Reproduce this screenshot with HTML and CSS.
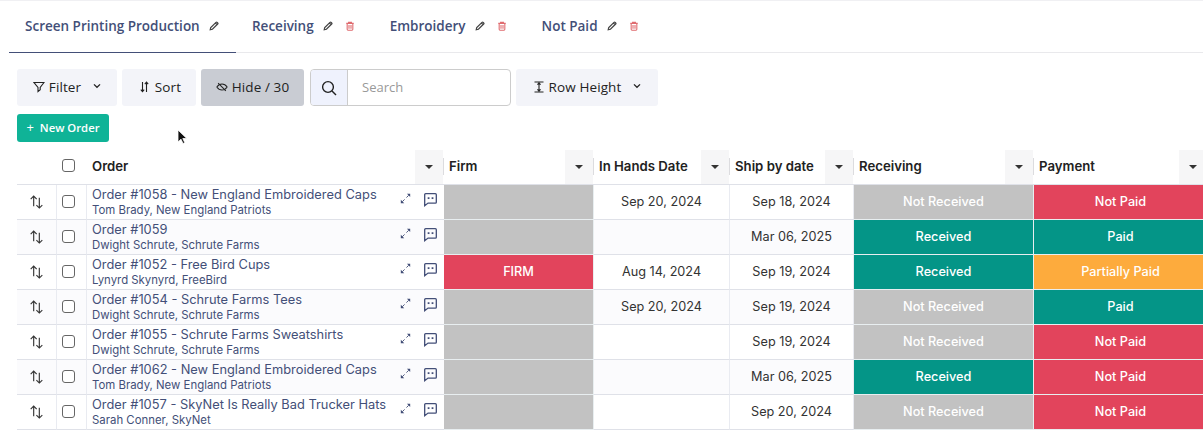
FILE: index.html
```html
<!DOCTYPE html>
<html lang="en">
<head>
    <meta charset="UTF-8">
    <title>Orders</title>
    <link rel="stylesheet" href="styles.css">
</head>
<body>
    <svg class="defs" width="0" height="0">
        <symbol id="pen" viewBox="0 0 12 12"><path d="M1.500 10.500l.6-2.600L8.400 1.600a1 1 0 0 1 1.400 0l.6.6a1 1 0 0 1 0 1.400L4.100 9.900z M7.600 2.400l2 2" fill="none" stroke="currentColor" stroke-width="1.500"/></symbol>
        <symbol id="trash" viewBox="0 0 12 12"><path d="M1.500 2.800h9M4.300 2.600V1.400h3.400v1.200M2.600 3v7a1 1 0 0 0 1 1h4.800a1 1 0 0 0 1-1V3M4.800 4.800v4.400M7.200 4.800v4.400" fill="none" stroke="currentColor" stroke-width="1.300"/></symbol>
        <symbol id="chev" viewBox="0 0 10 6"><path d="M1.200 1l3.800 3.600L8.800 1" fill="none" stroke="currentColor" stroke-width="1.600"/></symbol>
        <symbol id="updown" viewBox="0 0 16 16"><path d="M5 13V2.500M1.800 5.500L5 2.200l3.200 3.300M11 4V15M7.900 11.800l3.100 3.200 3.200-3.200" fill="none" stroke="currentColor" stroke-width="1.200"/></symbol>
        <symbol id="expand" viewBox="0 0 12 12"><path d="M7 5l2.500-2.500" fill="none" stroke="currentColor" stroke-width="1"/><path d="M7.600 .9h3.500v3.500z" fill="currentColor"/><path d="M5 7l-2.500 2.500" fill="none" stroke="currentColor" stroke-width="1"/><path d="M.9 7.400v3.700h3.700z" fill="currentColor"/></symbol>
        <symbol id="chat" viewBox="0 0 16 16"><path d="M2.800 1.800h10.400a1 1 0 0 1 1 1v8a1 1 0 0 1-1 1H5.400l-3.600 2.800V2.800a1 1 0 0 1 1-1z" fill="none" stroke="currentColor" stroke-width="1.400"/><rect x="5" y="5.600" width="1.900" height="1.900" fill="currentColor"/><rect x="9.200" y="5.600" width="1.900" height="1.900" fill="currentColor"/></symbol>
    </svg>

    <div class="page">
        <nav class="tabs">
            <div class="tab tab-active">
                <span>Screen Printing Production</span>
                <svg class="ico-pen"><use href="#pen"/></svg>
            </div>
            <div class="tab">
                <span>Receiving</span>
                <svg class="ico-pen"><use href="#pen"/></svg>
                <svg class="ico-trash"><use href="#trash"/></svg>
            </div>
            <div class="tab">
                <span>Embroidery</span>
                <svg class="ico-pen"><use href="#pen"/></svg>
                <svg class="ico-trash"><use href="#trash"/></svg>
            </div>
            <div class="tab">
                <span>Not Paid</span>
                <svg class="ico-pen"><use href="#pen"/></svg>
                <svg class="ico-trash"><use href="#trash"/></svg>
            </div>
        </nav>

        <div class="toolbar">
            <button class="tool tool-filter">
                <svg class="ico-tool" viewBox="0 0 12 12"><path d="M1 1.500h10L7.200 6.400v2.400L5 10.600V6.400z" fill="none" stroke="currentColor" stroke-width="1.100"/></svg>
                Filter
                <svg class="ico-chev"><use href="#chev"/></svg>
            </button>
            <button class="tool tool-sort">
                <svg class="ico-sort" viewBox="0 0 9 12"><path d="M2.500 1v9.500M.8 8.600l1.700 2 1.700-2M6.500 11V1.500M4.800 3.200l1.700-2 1.700 2" fill="none" stroke="currentColor" stroke-width="1.100"/></svg>
                Sort
            </button>
            <button class="tool tool-hide">
                <svg class="ico-tool" viewBox="0 0 14 12"><path d="M1 6c1.600-2.400 3.600-3.600 6-3.600S11.400 3.600 13 6c-1.600 2.400-3.600 3.600-6 3.600S2.600 8.400 1 6zM2.500 1.500l9 9" fill="none" stroke="currentColor" stroke-width="1.200"/></svg>
                Hide / 30
            </button>
            <div class="search">
                <span class="search-btn">
                    <svg class="ico-search" viewBox="0 0 16 16"><circle cx="7" cy="7" r="5.400" fill="none" stroke="currentColor" stroke-width="1.400"/><path d="M11 11l4 4" fill="none" stroke="currentColor" stroke-width="1.400"/></svg>
                </span>
                <span class="search-input">Search</span>
            </div>
            <button class="tool tool-height">
                <svg class="ico-tool" viewBox="0 0 12 12"><path d="M1.500 1h9M1.500 11h9M6 2v8M4.400 3.600L6 2l1.600 1.600M4.400 8.400L6 10l1.600-1.600" fill="none" stroke="currentColor" stroke-width="1.100"/></svg>
                Row Height
                <svg class="ico-chev"><use href="#chev"/></svg>
            </button>
        </div>

        <button class="new-order"><span class="plus">+</span> New Order</button>

        <svg class="cursor" viewBox="0 0 10 16"><path d="M1 1v12l3-2.800 2 4.300 1.800-.8-2-4.200h4z" fill="#111" stroke="#fff" stroke-width=".8"/></svg>

        <div class="grid">
            <div class="head head-blank"></div>
            <div class="head"><span class="check"></span></div>
            <div class="head">Order<span class="menu"></span></div>
            <div class="head">Firm<span class="menu"></span></div>
            <div class="head">In Hands Date<span class="menu"></span></div>
            <div class="head">Ship by date<span class="menu"></span></div>
            <div class="head">Receiving<span class="menu"></span></div>
            <div class="head">Payment<span class="menu"></span></div>

            <div class="cell move"><svg class="ico-updown"><use href="#updown"/></svg></div>
            <div class="cell pick"><span class="check"></span></div>
            <div class="cell order">
                <div class="order-text"><div class="order-name">Order #1058 - New England Embroidered Caps</div><div class="order-sub">Tom Brady, New England Patriots</div></div>
                <svg class="ico-expand"><use href="#expand"/></svg><svg class="ico-chat"><use href="#chat"/></svg>
            </div>
            <div class="cell fill grey"></div>
            <div class="cell date">Sep 20, 2024</div>
            <div class="cell date">Sep 18, 2024</div>
            <div class="cell fill grey">Not Received</div>
            <div class="cell fill red">Not Paid</div>

            <div class="cell move alt"><svg class="ico-updown"><use href="#updown"/></svg></div>
            <div class="cell pick alt"><span class="check"></span></div>
            <div class="cell order alt">
                <div class="order-text"><div class="order-name">Order #1059</div><div class="order-sub">Dwight Schrute, Schrute Farms</div></div>
                <svg class="ico-expand"><use href="#expand"/></svg><svg class="ico-chat"><use href="#chat"/></svg>
            </div>
            <div class="cell fill grey"></div>
            <div class="cell date alt"></div>
            <div class="cell date alt">Mar 06, 2025</div>
            <div class="cell fill green">Received</div>
            <div class="cell fill green">Paid</div>

            <div class="cell move"><svg class="ico-updown"><use href="#updown"/></svg></div>
            <div class="cell pick"><span class="check"></span></div>
            <div class="cell order">
                <div class="order-text"><div class="order-name">Order #1052 - Free Bird Cups</div><div class="order-sub">Lynyrd Skynyrd, FreeBird</div></div>
                <svg class="ico-expand"><use href="#expand"/></svg><svg class="ico-chat"><use href="#chat"/></svg>
            </div>
            <div class="cell fill red">FIRM</div>
            <div class="cell date">Aug 14, 2024</div>
            <div class="cell date">Sep 19, 2024</div>
            <div class="cell fill green">Received</div>
            <div class="cell fill orange">Partially Paid</div>

            <div class="cell move alt"><svg class="ico-updown"><use href="#updown"/></svg></div>
            <div class="cell pick alt"><span class="check"></span></div>
            <div class="cell order alt">
                <div class="order-text"><div class="order-name">Order #1054 - Schrute Farms Tees</div><div class="order-sub">Dwight Schrute, Schrute Farms</div></div>
                <svg class="ico-expand"><use href="#expand"/></svg><svg class="ico-chat"><use href="#chat"/></svg>
            </div>
            <div class="cell fill grey"></div>
            <div class="cell date alt">Sep 20, 2024</div>
            <div class="cell date alt">Sep 19, 2024</div>
            <div class="cell fill grey">Not Received</div>
            <div class="cell fill green">Paid</div>

            <div class="cell move"><svg class="ico-updown"><use href="#updown"/></svg></div>
            <div class="cell pick"><span class="check"></span></div>
            <div class="cell order">
                <div class="order-text"><div class="order-name">Order #1055 - Schrute Farms Sweatshirts</div><div class="order-sub">Dwight Schrute, Schrute Farms</div></div>
                <svg class="ico-expand"><use href="#expand"/></svg><svg class="ico-chat"><use href="#chat"/></svg>
            </div>
            <div class="cell fill grey"></div>
            <div class="cell date"></div>
            <div class="cell date">Sep 19, 2024</div>
            <div class="cell fill grey">Not Received</div>
            <div class="cell fill red">Not Paid</div>

            <div class="cell move alt"><svg class="ico-updown"><use href="#updown"/></svg></div>
            <div class="cell pick alt"><span class="check"></span></div>
            <div class="cell order alt">
                <div class="order-text"><div class="order-name">Order #1062 - New England Embroidered Caps</div><div class="order-sub">Tom Brady, New England Patriots</div></div>
                <svg class="ico-expand"><use href="#expand"/></svg><svg class="ico-chat"><use href="#chat"/></svg>
            </div>
            <div class="cell fill grey"></div>
            <div class="cell date alt"></div>
            <div class="cell date alt">Mar 06, 2025</div>
            <div class="cell fill green">Received</div>
            <div class="cell fill red">Not Paid</div>

            <div class="cell move"><svg class="ico-updown"><use href="#updown"/></svg></div>
            <div class="cell pick"><span class="check"></span></div>
            <div class="cell order">
                <div class="order-text"><div class="order-name">Order #1057 - SkyNet Is Really Bad Trucker Hats</div><div class="order-sub">Sarah Conner, SkyNet</div></div>
                <svg class="ico-expand"><use href="#expand"/></svg><svg class="ico-chat"><use href="#chat"/></svg>
            </div>
            <div class="cell fill grey"></div>
            <div class="cell date"></div>
            <div class="cell date">Sep 20, 2024</div>
            <div class="cell fill grey">Not Received</div>
            <div class="cell fill red">Not Paid</div>
        </div>
    </div>
</body>
</html>
```

FILE: styles.css
```css
html, body {
    margin: 0;
    height: 448px;
    overflow: hidden;
    background: #fff;
}
body {
    font-family: Inter, "Liberation Sans", sans-serif;
    color: #222;
}
.defs {
    position: absolute;
}
.page {
    position: relative;
    height: 448px;
    overflow: hidden;
    border-top: 1px solid #f0f0f3;
}

/* tabs */
.tabs {
    display: flex;
    height: 51px;
    margin-left: 9px;
    border-bottom: 1px solid #e9e9ec;
    font-family: "Open Sans", sans-serif;
    font-size: 13.5px;
    font-weight: 600;
    color: #434f78;
}
.tab {
    display: flex;
    align-items: center;
    gap: 9px;
    height: 52px;
    box-sizing: border-box;
    padding: 0 16px 2px 16px;
    margin-right: 3px;
    border-bottom: 1px solid transparent;
}
.tab-active {
    width: 227px;
    margin-right: 0;
    border-bottom-color: #434f78;
}
.ico-pen {
    width: 10px;
    height: 10px;
    color: #444;
}
.ico-trash {
    width: 10px;
    height: 10px;
    margin-left: 3px;
    color: #df6b6f;
}

/* toolbar */
.toolbar {
    display: flex;
    gap: 5px;
    margin: 16px 0 0 17px;
    height: 37px;
}
.tool {
    display: flex;
    align-items: center;
    justify-content: center;
    gap: 4px;
    height: 37px;
    padding: 0 0 2px;
    border: none;
    border-radius: 3px;
    background: #f3f4f9;
    font-family: "Open Sans", sans-serif;
    font-size: 13.5px;
    letter-spacing: .1px;
    color: #222;
}
.tool-filter { width: 100px; }
.tool-sort { width: 74px; gap: 6px; padding-left: 3px; }
.tool-hide { width: 103px; margin-right: 1px; background: #c9ccd3; }
.tool-height { width: 142px; }
.ico-tool {
    width: 12px;
    height: 12px;
}
.ico-sort {
    width: 9px;
    height: 12px;
}
.ico-chev {
    width: 8px;
    height: 6px;
    margin: 0 0 2px 8px;
}
.search {
    display: flex;
    width: 201px;
    height: 37px;
    box-sizing: border-box;
    border: 1px solid #ccc;
    border-radius: 4px;
    overflow: hidden;
}
.search-btn {
    display: flex;
    align-items: center;
    justify-content: center;
    width: 36px;
    background: #eff2fd;
    border-right: 1px solid #ccc;
}
.ico-search {
    width: 16px;
    height: 16px;
}
.search-input {
    padding-left: 14px;
    font-family: "Open Sans", sans-serif;
    font-size: 13px;
    line-height: 35px;
    color: #999;
}
.new-order {
    display: block;
    width: 92px;
    height: 28px;
    margin: 8px 0 0 17px;
    padding: 0 0 2px;
    border: none;
    border-radius: 3px;
    background: #0fb397;
    color: #fff;
    font-family: "Open Sans", sans-serif;
    font-size: 11.3px;
    font-weight: 600;
}
.plus {
    margin-right: 3px;
    font-weight: 400;
    font-size: 13px;
}
.cursor {
    position: absolute;
    left: 177px;
    top: 128px;
    width: 10px;
    height: 16px;
}

/* table */
.grid {
    display: grid;
    width: 1191px;
    grid-template-columns: 40px 30px 357px 150px 136px 124px 180px 174px;
    grid-template-rows: repeat(8, 35px);
    margin: 8px 0 0 17px;
    font-size: 13px;
}
.head {
    position: relative;
    display: flex;
    align-items: center;
    padding: 0 0 3px 5px;
    font-weight: 600;
    font-size: 13.2px;
    color: #222;
    border-bottom: 1px solid #dfe1e8;
    background: #fff;
}
.head-blank {
    padding: 0;
}
.menu {
    position: absolute;
    right: 1px;
    top: 0;
    bottom: 0;
    width: 28px;
    background: #f6f6f7;
}
.menu::before {
    content: "";
    position: absolute;
    right: -1px;
    top: 8px;
    height: 17px;
    width: 1px;
    background: #dcdcdf;
}
.menu::after {
    content: "";
    position: absolute;
    left: 10px;
    top: 15px;
    border-left: 4px solid transparent;
    border-right: 4px solid transparent;
    border-top: 4px solid #333;
}
.cell {
    display: flex;
    align-items: center;
    justify-content: center;
    box-sizing: border-box;
    padding-bottom: 2px;
    border-bottom: 1px solid #dfe1e8;
    border-right: 1px solid #e9ebf1;
    background: #fff;
}
.alt {
    background: #fbfbfd;
}
.check {
    display: block;
    box-sizing: border-box;
    width: 13px;
    height: 13px;
    border: 1px solid #666;
    border-radius: 3px;
    background: #fff;
}
.pick {
    justify-content: flex-start;
    padding-left: 5px;
}
.ico-updown {
    width: 15px;
    height: 15px;
    color: #333;
}
.order {
    justify-content: flex-start;
    padding-left: 5px;
    border-right: none;
    color: #434f78;
}
.order-text {
    flex: 1;
    min-width: 0;
    margin-top: 1px;
    white-space: nowrap;
}
.order-name {
    font-size: 12.85px;
    line-height: 16px;
}
.order-sub {
    font-size: 11.4px;
    line-height: 14px;
}
.ico-expand {
    width: 11px;
    height: 11px;
    margin-right: 12px;
    margin-top: -6px;
}
.ico-chat {
    width: 15px;
    height: 15px;
    margin-right: 6px;
    margin-top: -4px;
}
.date {
    color: #333;
    font-size: 12.7px;
}
.fill {
    color: #fff;
    font-weight: 500;
    font-size: 12.7px;
    border-bottom: 1px solid #e8eef0;
    border-right: 1px solid #e8eef0;
}
.grey { background: #c2c2c2; }
.red { background: #e2445c; }
.green { background: #049587; }
.orange { background: #fdab3d; }
```
